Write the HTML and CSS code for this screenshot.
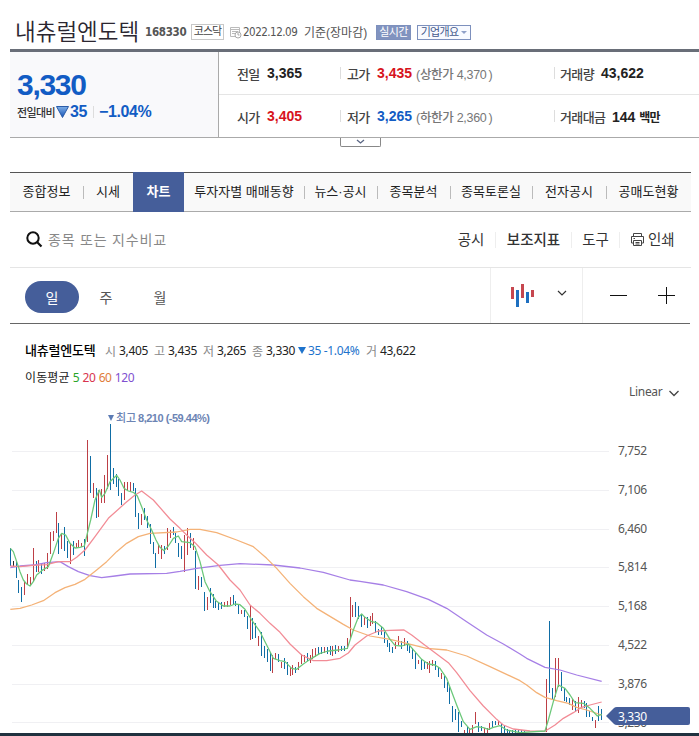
FILE: index.html
```html
<!DOCTYPE html>
<html lang="ko">
<head>
  <meta charset="UTF-8">
  <title>내츄럴엔도텍 차트</title>
  <link rel="stylesheet" href="styles.css">
</head>
<body>
  <!-- 종목명 -->
  <header class="title-bar">
    <h1>내츄럴엔도텍</h1>
    <span class="code">168330</span>
    <span class="market">코스닥</span>
    <svg class="date-icon" width="13" height="13" viewBox="0 0 13 13">
      <path d="M1.5 1.5h9v9h-9zM1.5 3.5h9M3 5.5h6M3 7.5h3" fill="none" stroke="#bbb"/>
      <circle cx="9" cy="9" r="3" fill="#fff" stroke="#aaa"/>
      <path d="M9 7v2h1.5" fill="none" stroke="#aaa"/>
    </svg>
    <span class="date">2022.12.09</span>
    <span class="basis">기준(장마감)</span>
    <span class="live">실시간</span>
    <span class="outline">기업개요<i></i></span>
  </header>

  <!-- 시세 요약 -->
  <section class="summary">
    <div class="today">
      <strong class="price">3,330</strong>
      <div class="change">
        <span class="change-label">전일대비</span>
        <svg width="13" height="12" viewBox="0 0 13 12">
          <defs>
            <linearGradient id="down" x1="0" y1="0" x2="0" y2="1">
              <stop offset="0" stop-color="#7fb0e8"/>
              <stop offset="1" stop-color="#1551b5"/>
            </linearGradient>
          </defs>
          <path d="M.5.5h12L6.5 11.500z" fill="url(#down)" stroke="#2b5ca8"/>
        </svg>
        <b class="diff">35</b>
        <b class="rate">−1.04%</b>
      </div>
    </div>
    <div class="detail">
      <div class="detail-row">
        <div class="cell first"><span>전일</span><b>3,365</b></div>
        <div class="cell second"><span>고가</span><b class="up">3,435</b><em>(상한가 4,370<i>)</i></em></div>
        <div class="cell third"><span>거래량</span><b>43,622</b></div>
      </div>
      <div class="detail-row">
        <div class="cell first"><span>시가</span><b class="up">3,405</b></div>
        <div class="cell second"><span>저가</span><b class="down">3,265</b><em>(하한가 2,360<i>)</i></em></div>
        <div class="cell third"><span>거래대금</span><b class="amount">144 <small>백만</small></b></div>
      </div>
    </div>
  </section>
  <button class="fold">
    <svg width="9" height="6" viewBox="0 0 9 6"><path d="M1 1l3.500 3L8 1" fill="none" stroke="#5a6684" stroke-width="1.300"/></svg>
  </button>

  <!-- 탭 메뉴 -->
  <nav class="tabs">
    <a class="w73">종합정보</a>
    <a class="w50 plain">시세</a>
    <a class="w51 active">차트</a>
    <a class="w120">투자자별 매매동향</a>
    <a class="w73">뉴스·공시</a>
    <a class="w73">종목분석</a>
    <a class="w82">종목토론실</a>
    <a class="w74">전자공시</a>
    <a class="w85 plain">공매도현황</a>
  </nav>

  <!-- 검색 / 메뉴 -->
  <div class="search-bar">
    <svg width="17" height="17" viewBox="0 0 17 17"><circle cx="7" cy="7" r="5.700" fill="none" stroke="#111" stroke-width="2"/><path d="M11 11l4.500 4.500" stroke="#111" stroke-width="2.200"/></svg>
    <span class="placeholder">종목 또는 지수비교</span>
    <div class="menu">
      <a class="menu-notice">공시</a>
      <a class="menu-index">보조지표</a>
      <a class="menu-tool">도구</a>
      <a class="menu-print">
        <svg width="15" height="15" viewBox="0 0 15 15" fill="none" stroke="#444"><path d="M3.500 4V1.500h8V4M3.500 11h-2V4.500h12V11h-2"/><path d="M3.500 8.500h8v5h-8zM5.500 10.500h4M5.500 12h4M3.500 6.500h1.500"/></svg>인쇄
      </a>
    </div>
  </div>

  <!-- 기간 / 차트 종류 -->
  <div class="toolbar">
    <div class="period">
      <button class="on">일</button>
      <button>주</button>
      <button>월</button>
    </div>
    <div class="chart-type">
      <svg width="24" height="24" viewBox="0 0 24 24">
        <path d="M1.500 4v12M11.500 1v14M21.500 7v7" stroke="#c6474f" stroke-width="3"/>
        <path d="M6.500 7v17M16.500 9v11" stroke="#1e6fc0" stroke-width="3"/>
      </svg>
      <svg class="arrow" width="10" height="6" viewBox="0 0 10 6"><path d="M1 1l4 4 4-4" fill="none" stroke="#333" stroke-width="1.200"/></svg>
    </div>
    <div class="zoom">
      <svg width="17" height="17" viewBox="0 0 17 17"><path d="M0 8.500h17" stroke="#111"/></svg>
      <svg width="17" height="17" viewBox="0 0 17 17"><path d="M0 8.500h17M8.500 0v17" stroke="#111"/></svg>
    </div>
  </div>

  <!-- 범례 -->
  <div class="legend">
    <b class="name">내츄럴엔도텍</b>
    <i>시</i><span>3,405</span>
    <i>고</i><span>3,435</span>
    <i>저</i><span>3,265</span>
    <i>종</i><span class="last">3,330</span>
    <svg width="8" height="7" viewBox="0 0 8 7"><path d="M0 0h8L4 7z" fill="#1e73cc"/></svg>
    <span class="loss">35 -1.04%</span>
    <i>거</i><span>43,622</span>
  </div>
  <div class="average">
    <div class="ma">이동평균 <span class="ma5">5</span> <span class="ma20">20</span> <span class="ma60">60</span> <span class="ma120">120</span></div>
    <div class="scale">Linear
      <svg width="10" height="7" viewBox="0 0 10 7"><path d="M.5 1L5 5.500 9.500 1" fill="none" stroke="#444" stroke-width="1.300"/></svg>
    </div>
  </div>

  <!-- 차트 -->
  <svg class="chart" width="699" height="323" viewBox="0 0 699 323">
    <path class="grid" d="M12 41.500H609M12 80.500H609M12 119.500H609M12 157.500H609M12 196.500H609M12 235.500H609M12 274.500H609M12 312.500H609"/>
    <g transform="scale(.333333)">
      <!-- 상승 -->
      <g class="bar rise">
        <path d="M73 515V556M82 492V525M91 502V528M100 414V512M115 450V485M133 460V484M142 430V478M151 367V432M160 362V392M169 306V370M184 372V418M211 403V462M229 400V414M235 390V414M244 400V412M262 89V395M280 220V263M295 240V322M304 238V280M313 196V280M322 134V237M373 216V270M382 216V240M391 216V242M424 312V344M475 405V433M484 405V448M502 353V420M511 360V383"/>
        <path transform="translate(510 270)" d="M43 105V215M52 84V165M70 115V150M85 228V270M112 290V330M163 306V320M172 304V322M181 292V316M214 330V342M241 315V420M265 408V438M307 465V520M316 458V478M334 486V504M361 500V528M367 495V526M385 485V510M394 462V492M403 464V485M421 465V490M427 447V478M436 445V472M463 440V458M487 438V468M505 438V456M514 438V454M523 438V454"/>
        <path transform="translate(1020 510)" d="M22 175V208M31 52V175M37 75V110M73 110V135M91 108V138M97 98V132M166 185V208M175 168V198M193 175V198M235 240V252M262 246V266M268 244V280M277 240V258M304 280V296M373 450V460M388 443V460M397 435V458M406 396V432M433 443V460M442 445V460M448 428V450M475 422V435"/>
        <path transform="translate(1530 570)" d="M109 236V395M136 175V290M145 175V262M187 298V330M205 290V338M214 300V320M256 360V384"/>
      </g>
      <!-- 하락 -->
      <g class="bar fall">
        <path d="M31 415V467M50 455V503M55 510V548M64 530V575M109 453V487M124 462V493M175 340V433M193 352V422M202 393V444M220 392V435M253 388V437M271 138V250M289 234V324M331 42V240M340 174V222M349 192V232M355 208V258M364 250V284M400 220V242M406 235V320M415 310V358M433 295V330M442 318V355M451 342V402M460 397V433M466 428V473M493 408V432"/>
        <path transform="translate(510 270)" d="M10 80V105M16 98V128M25 130V170M34 138V178M61 98V145M76 152V266M94 232V262M103 277V332M121 263V308M130 283V324M136 302V325M145 308V330M154 305V326M190 285V312M196 304V318M205 314V342M223 330V352M232 347V388M247 355V418M256 370V415M274 397V467M283 438V474M292 446V486M301 456V514M325 462V485M343 475V508M352 485V526M376 500V518M412 458V484M445 442V466M454 442V462M472 442V462M481 438V466M496 436V462"/>
        <path transform="translate(1020 510)" d="M4 197V214M13 198V212M46 66V112M55 78V118M64 105V140M82 112V143M106 122V160M115 148V164M124 138V165M133 155V188M142 180V200M148 188V215M157 202V218M184 183V206M202 183V212M208 195V220M217 205V236M226 220V268M244 238V270M253 245V268M286 242V270M295 260V292M313 288V325M322 305V335M328 315V373M337 378V426M346 388V420M355 397V455M364 422V442M382 440V458M415 425V455M424 438V452M457 422V440M466 422V436M484 430V460M493 436V460M502 448V460M508 450V460M517 450V460M526 450V460M535 450V460"/>
        <path transform="translate(1530 570)" d="M16 391V400M25 391V400M34 391V400M43 394V400M118 62V280M127 264V298M154 215V272M163 264V304M169 290V306M178 293V315M196 303V336M223 302V325M229 310V350M238 333V352M247 350V362M265 317V362M274 328V360"/>
      </g>
      <path class="bar flat" d="M40 452V472"/>
      <path class="line line120" d="M31 473L60 468 100 465 140 458 180 455 205 470 235 485 270 497 305 503 345 498 390 492 500 490 540 484 590 475 660 466 720 461 820 465 900 474 970 487 1050 510 1080 514 1150 525 1220 545 1285 568 1340 595 1400 635 1460 675 1510 702 1560 732 1580 745 1635 772 1680 780 1730 795 1805 814"/>
      <path class="line line60" d="M31 598L60 595 95 585 130 572 165 548 195 533 225 523 255 508 290 480 320 455 350 425 380 400 415 380 450 370 530 366 570 358 600 358 650 368 710 390 760 410 800 445 830 475 870 520 910 560 950 595 1000 625 1030 643 1060 660 1110 678 1170 688 1220 700 1280 715 1340 720 1400 738 1470 770 1560 812 1580 825 1610 848 1635 862 1670 872 1705 880 1730 892 1760 900 1805 915"/>
      <path class="line line20" d="M31 468L60 470 100 466 140 464 175 455 210 455 230 442 255 420 285 380 325 325 375 280 405 255 425 243 460 270 510 327 540 355 560 375 585 398 620 435 655 465 690 510 720 540 750 585 780 610 810 640 840 667 870 702 905 735 940 752 980 752 1020 745 1045 729 1065 705 1100 678 1135 663 1170 661 1212 660 1235 675 1270 702 1310 732 1345 758 1370 788 1410 842 1450 888 1490 928 1510 945 1540 957 1590 963 1635 964 1665 945 1690 925 1720 908 1745 892 1770 885 1805 876"/>
      <path class="line line5" d="M31 415L40 425 50 455 60 485 70 510 80 522 90 528 100 515 110 495 125 482 145 470 160 430 175 385 185 370 197 375 210 400 225 414 240 412 253 408 262 370 272 330 285 270 298 240 305 262 315 250 330 215 350 196 360 210 372 235 385 243 400 247 412 258 425 290 440 330 455 360 468 390 480 412 492 422 505 408 520 385 535 378 545 395 570 398 585 410 600 455 615 515 630 545 648 572 670 588 690 588 705 582 720 584 735 598 755 630 780 665 800 705 820 745 840 752 855 755 875 775 890 778 910 762 935 745 960 730 985 723 1015 720 1042 715 1060 660 1075 622 1085 612 1095 622 1115 635 1130 638 1150 655 1170 688 1185 706 1205 708 1225 702 1245 725 1265 748 1285 762 1305 765 1320 775 1340 805 1355 845 1370 885 1390 935 1410 958 1430 950 1450 953 1465 958 1480 952 1500 947 1520 960 1560 968 1635 963 1645 930 1660 875 1675 825 1695 835 1710 855 1725 878 1750 880 1770 895 1792 918 1805 913"/>
    </g>
    <path d="M108 5h6l-3 6z" fill="#5c7bb4"/>
    <text class="peak" x="116" y="12" textLength="20">최고</text>
    <text class="peak peak-num" x="138" y="12" textLength="72">8,210 (-59.44%)</text>
    <g class="axis">
      <text x="618" y="45" textLength="29">7,752</text>
      <text x="618" y="84" textLength="29">7,106</text>
      <text x="618" y="123" textLength="29">6,460</text>
      <text x="618" y="161" textLength="29">5,814</text>
      <text x="618" y="200" textLength="29">5,168</text>
      <text x="618" y="239" textLength="29">4,522</text>
      <text x="618" y="278" textLength="29">3,876</text>
      <text x="618" y="317" textLength="29">3,230</text>
    </g>
    <path d="M606 306l8-8q1-1 3-1h71q2 0 2 2v14q0 2-2 2h-71q-2 0-3-1z" fill="#455e9a"/>
    <text class="now" x="618" y="311" textLength="29">3,330</text>
  </svg>
  <div class="bottom-edge"></div>
</body>
</html>
```
FILE: styles.css
```css
* {
  margin: 0;
  padding: 0;
  box-sizing: border-box;
}
body {
  width: 699px;
  height: 736px;
  overflow: hidden;
  background: #fff;
  color: #222;
  font-family: "Liberation Sans", "Noto Sans CJK KR", sans-serif;
  font-size: 12px;
  white-space: nowrap;
}
svg {
  display: block;
  flex: none;
}
i, em {
  font-style: normal;
}
button {
  border: 0;
  background: none;
  font-family: inherit;
}

/* 종목명 */
.title-bar {
  display: flex;
  align-items: center;
  height: 49px;
  padding: 15px 0 0 15px;
}
.title-bar h1 {
  width: 130px;
  padding-bottom: 4px;
  font: 350 22.500px/30px "Noto Sans CJK KR", sans-serif;
  color: #2b2630;
}
.code {
  width: 46px;
  font: bold 11.500px "DejaVu Sans Condensed", sans-serif;
  letter-spacing: -0.3px;
  color: #555;
}
.market {
  width: 33px;
  height: 16px;
  border: 1px solid #c8c8c8;
  font-size: 11px;
  line-height: 13px;
  letter-spacing: -1px;
  text-align: center;
  color: #444;
}
.date-icon {
  margin-left: 5px;
}
.date {
  width: 61px;
  margin-left: 1px;
  font: 11.500px "DejaVu Sans Condensed", sans-serif;
  letter-spacing: -0.5px;
  color: #555;
}
.basis {
  width: 73px;
  padding-bottom: 2px;
  color: #555;
}
.live,
.outline {
  height: 15px;
  border: 1px solid #7d90bd;
  font-size: 11px;
  line-height: 12px;
  text-align: center;
}
.live {
  width: 35px;
  margin-left: -1px;
  background: #8193bf;
  color: #fff;
  letter-spacing: -0.6px;
}
.outline {
  display: flex;
  align-items: center;
  justify-content: center;
  gap: 3px;
  width: 54px;
  margin-left: 6px;
  background: #f8faff;
  color: #45598c;
  letter-spacing: -0.7px;
}
.outline i {
  border: 3px solid transparent;
  border-top-color: #8fa0c8;
  border-bottom: 0;
}

/* 시세 요약 */
.summary {
  display: flex;
  height: 89px;
  margin-left: 10px;
  border-top: 3px solid #696e78;
  border-bottom: 1px solid #aaa;
}
.today {
  width: 209px;
  padding: 16px 0 0 7px;
  border-right: 1px solid #aaa;
  background: #f9f9fb;
}
.price {
  display: block;
  height: 33px;
  font-size: 30px;
  line-height: 33px;
  letter-spacing: -1.3px;
  color: #125cc4;
}
.change {
  display: flex;
  align-items: center;
  height: 22px;
  color: #125cc4;
}
.change-label {
  width: 39px;
  font-size: 11px;
  font-weight: 500;
  letter-spacing: -0.6px;
  color: #333;
}
.diff,
.rate {
  font-size: 16px;
  letter-spacing: -0.3px;
}
.diff {
  width: 24px;
  margin-left: 1px;
  border-right: 1px solid #ddd;
  line-height: 12px;
}
.rate {
  margin-left: 5px;
  letter-spacing: -0.4px;
}
.detail {
  flex: 1;
}
.detail-row {
  display: flex;
  height: 42px;
  align-items: center;
}
.detail-row:first-child {
  height: 43px;
  border-bottom: 1px solid #e5e5e5;
}
.cell {
  display: flex;
  align-items: center;
  height: 12px;
}
.cell span {
  font-size: 13px;
  font-weight: 500;
  letter-spacing: -0.6px;
  color: #444;
}
.cell b {
  font-size: 14px;
}
.cell em {
  margin-left: 4px;
  font-size: 12.500px;
  font-weight: 500;
  letter-spacing: -0.3px;
  color: #777;
}
.cell em i {
  margin-left: 2px;
}
.first {
  width: 121px;
  padding-left: 18px;
}
.first span,
.second span {
  width: 30px;
}
.second {
  width: 214px;
  padding-left: 6px;
  border-left: 1px solid #ddd;
}
.third {
  padding-left: 5px;
  border-left: 1px solid #ddd;
}
.third span {
  width: 41px;
}
.third .amount {
  margin-left: 11px;
}
.amount small {
  font-size: 12px;
  letter-spacing: -0.9px;
}
.up {
  color: #d7141c;
}
.cell .down {
  color: #125cc4;
}
.fold {
  display: flex;
  align-items: center;
  justify-content: center;
  width: 41px;
  height: 9px;
  margin-left: 340px;
  border: 1px solid #888;
  border-top: 0;
  border-radius: 0 0 2px 2px;
}

/* 탭 메뉴 */
.tabs {
  display: flex;
  width: 681px;
  height: 40px;
  margin: 25px 0 0 10px;
  border-top: 1px solid #555;
  border-bottom: 1px solid #aaa;
  background: #f9f9f9;
}
.tabs a {
  position: relative;
  font-size: 13px;
  line-height: 38px;
  text-align: center;
  color: #222;
}
.tabs a::after {
  content: "";
  position: absolute;
  top: 13px;
  right: -1px;
  width: 1px;
  height: 13px;
  background: #bbb;
}
.tabs .plain::after,
.tabs .active::after {
  display: none;
}
.tabs .active {
  height: 40px;
  margin-top: -1px;
  background: #455e9a;
  color: #fff;
  font-weight: bold;
  line-height: 40px;
}
.w50 { width: 50px; }
.w51 { width: 51px; }
.w73 { width: 73px; }
.w74 { width: 74px; }
.w82 { width: 82px; }
.w85 { width: 85px; }
.w120 { width: 120px; }

/* 검색 */
.search-bar {
  display: flex;
  align-items: center;
  width: 681px;
  height: 56px;
  margin-left: 10px;
  padding-left: 16px;
  border-bottom: 1px solid #e5e5e5;
}
.placeholder {
  margin-left: 5px;
  padding-bottom: 2px;
  font-size: 14px;
  letter-spacing: 0.8px;
  color: #888;
}
.menu {
  display: flex;
  margin-left: auto;
  font-size: 14.500px;
  line-height: 16px;
  color: #333;
}
.menu a {
  border-left: 1px solid #eee;
  text-align: center;
}
.menu .menu-notice {
  width: 48px;
  border: 0;
}
.menu-index {
  width: 76px;
  font-weight: 500;
}
.menu-tool {
  width: 48px;
}
.menu .menu-print {
  display: flex;
  gap: 3px;
  width: 72px;
  padding-left: 10px;
}

/* 기간 */
.toolbar {
  display: flex;
  width: 680px;
  height: 56px;
  margin-left: 10px;
  border-bottom: 1px solid #666;
}
.period {
  display: flex;
  align-items: center;
  width: 480px;
  padding: 3px 0 0 15px;
}
.period button {
  width: 54px;
  height: 32px;
  font-size: 14px;
  color: #555;
}
.period .on {
  border-radius: 16px;
  background: #455e9a;
  color: #fff;
}
.chart-type {
  display: flex;
  gap: 22px;
  width: 93px;
  padding: 15px 0 0 20px;
  border: solid #eee;
  border-width: 0 1px;
}
.arrow {
  margin-top: 7px;
}
.zoom {
  display: flex;
  gap: 31px;
  padding: 19px 0 0 27px;
}

/* 범례 */
.legend {
  display: flex;
  align-items: center;
  height: 41px;
  padding: 12px 0 0 25px;
  font-family: "Noto Sans", "Noto Sans CJK KR", sans-serif;
  font-size: 12px;
  letter-spacing: -0.35px;
}
.legend .name {
  width: 80px;
  padding-bottom: 2px;
  font: 500 13px "Noto Sans CJK KR", sans-serif;
  letter-spacing: -0.2px;
  color: #000;
}
.legend i {
  width: 14px;
  color: #888;
}
.legend span {
  width: 35px;
}
.legend .last {
  width: 32px;
}
.legend .loss {
  width: 58px;
  margin-left: 2px;
  color: #1e73cc;
}
.average {
  display: flex;
  height: 45px;
  padding: 3px 0 0 25px;
  font-family: "Noto Sans", "Noto Sans CJK KR", sans-serif;
}
.ma {
  width: 604px;
  line-height: 20px;
  letter-spacing: 0.1px;
}
.ma span {
  letter-spacing: -0.4px;
}
.ma5 { color: #28a428; }
.ma20 { color: #d8344e; }
.ma60 { color: #e07c3a; }
.ma120 { color: #8050d0; }
.scale {
  display: flex;
  gap: 7px;
  padding-top: 15px;
  line-height: 18px;
  letter-spacing: -0.3px;
  color: #555;
}
.scale svg {
  margin-top: 7px;
}

/* 차트 */
.grid {
  stroke: #f0f0f3;
}
.bar {
  fill: none;
  stroke-width: 3;
  shape-rendering: crispEdges;
}
.rise { stroke: #bd3f46; }
.fall { stroke: #0f6da5; }
.flat { stroke: #222; }
.line {
  fill: none;
  stroke-width: 3.800;
  stroke-linejoin: round;
}
.line5 { stroke: #6cc87a; }
.line20 { stroke: #f28c96; }
.line60 { stroke: #f4b277; }
.line120 { stroke: #a67fe6; }
.peak {
  font: 500 11px "Noto Sans CJK KR", sans-serif;
  fill: #6c84b4;
}
.peak-num {
  font: bold 11px "Liberation Sans", sans-serif;
}
.axis text,
.now {
  font: 12px "Noto Sans", sans-serif;
  fill: #555;
}
.chart .now {
  fill: #fff;
}
.bottom-edge {
  height: 3px;
  background: #20323f;
}
```
